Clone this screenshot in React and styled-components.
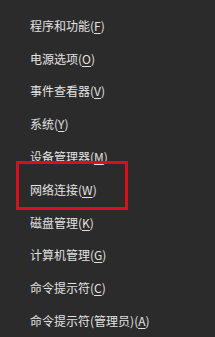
import React from "react";
import styled, { createGlobalStyle } from "styled-components";

const items = [
  { label: "程序和功能", key: "F" },
  { label: "电源选项", key: "O" },
  { label: "事件查看器", key: "V" },
  { label: "系统", key: "Y" },
  { label: "设备管理器", key: "M" },
  { label: "网络连接", key: "W", marked: true },
  { label: "磁盘管理", key: "K" },
  { label: "计算机管理", key: "G" },
  { label: "命令提示符", key: "C" },
  { label: "命令提示符(管理员)", key: "A" },
];

const App = () => {
  return (
    <>
      <GlobalStyle />
      <Menu>
        {items.map((item) => (
          <Item key={item.label} marked={item.marked}>
            {item.label}(<Accel>{item.key}</Accel>)
          </Item>
        ))}
      </Menu>
    </>
  );
};

export default App;

const GlobalStyle = createGlobalStyle`
  html, body {
    margin: 0;
    padding: 0;
    background: #2b2b2b;
  }
  body {
    width: 215px;
    height: 337px;
    overflow: hidden;
    font-family: "Noto Sans CJK SC", "Microsoft YaHei", sans-serif;
  }
`;

const Menu = styled.div`
  display: flex;
  flex-direction: column;
  padding: 9px 0 0 0;
  background: #2b2b2b;
  height: 337px;
  box-sizing: border-box;
`;

const Item = styled.div.withConfig({
  shouldForwardProp: (p) => p !== "marked",
})`
  position: relative;
  display: flex;
  align-items: center;
  height: 33px;
  padding-left: 30px;
  font-size: 12px;
  color: #e2e2e2;
  white-space: nowrap;

  ${(p) =>
    p.marked &&
    `
    &::before {
      content: "";
      position: absolute;
      left: 16px;
      top: -12px;
      width: 106px;
      height: 43px;
      border: 3px solid #d8101a;
    }
  `}
`;

const Accel = styled.span`
  text-decoration: underline;
  text-underline-offset: 2px;
`;
